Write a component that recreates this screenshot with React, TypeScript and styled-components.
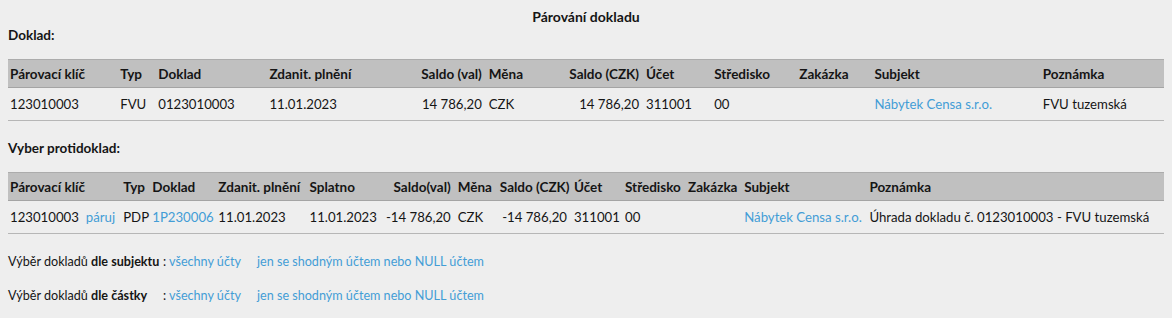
import React from 'react';
import styled, { createGlobalStyle } from 'styled-components';

const GlobalStyle = createGlobalStyle`
    html, body {
        margin: 0;
        padding: 0;
        background: #eeeeee;
    }
    body {
        font-family: Lato, 'Liberation Sans', sans-serif;
        font-size: 13px;
        color: #151515;
    }
`;

const Page = styled.div`
    padding: 9px 8px 0 8px;
`;

const PageTitle = styled.h1`
    margin: 0;
    font-size: 14px;
    line-height: 16px;
    font-weight: bold;
    text-align: center;
`;

const SectionTitle = styled.h2<{ $top: number }>`
    margin: ${p => p.$top}px 0 16px 0;
    font-size: 13.5px;
    line-height: 16px;
    font-weight: bold;
`;

const Table = styled.table`
    width: 100%;
    table-layout: fixed;
    border-collapse: collapse;
`;

const HeadRow = styled.tr`
    background: #c0c0c0;
    border-top: 1px solid #acacac;
    border-bottom: 1px solid #a4a4a4;
`;

const Th = styled.th<{ $right?: boolean }>`
    height: 27px;
    padding: 0 ${p => (p.$right ? '5px' : '2px')} 0 2px;
    text-align: ${p => (p.$right ? 'right' : 'left')};
    font-size: 13.5px;
    font-weight: bold;
    white-space: nowrap;
`;

const DataRow = styled.tr`
    border-bottom: 1px solid #b6b6b6;
`;

const Td = styled.td<{ $right?: boolean }>`
    height: 32px;
    padding: 0 ${p => (p.$right ? '5px' : '2px')} 0 2px;
    text-align: ${p => (p.$right ? 'right' : 'left')};
    font-size: 13.2px;
    white-space: nowrap;
`;

const Link = styled.a`
    color: #439dd6;
    text-decoration: none;
    cursor: pointer;
`;

const PairLink = styled(Link)`
    margin-left: 7px;
`;

const FilterList = styled.div`
    margin-top: 20px;
    display: grid;
    grid-template-columns: 155px 94px auto;
    row-gap: 18px;
    line-height: 16px;
    font-size: 12.6px;
    justify-content: start;
`;

const FilterLabel = styled.div`
    white-space: nowrap;
    b {
        font-weight: bold;
    }
`;

const FilterCell = styled.div`
    white-space: nowrap;
`;

type Col = { label: string; width: number; right?: boolean };

const docCols: Col[] = [
    { label: 'Párovací klíč', width: 110 },
    { label: 'Typ', width: 38 },
    { label: 'Doklad', width: 111 },
    { label: 'Zdanit. plnění', width: 131 },
    { label: 'Saldo (val)', width: 88, right: true },
    { label: 'Měna', width: 72 },
    { label: 'Saldo (CZK)', width: 85, right: true },
    { label: 'Účet', width: 68 },
    { label: 'Středisko', width: 85 },
    { label: 'Zakázka', width: 75 },
    { label: 'Subjekt', width: 168 },
    { label: 'Poznámka', width: 123 },
];

const counterCols: Col[] = [
    { label: 'Párovací klíč', width: 113 },
    { label: 'Typ', width: 29 },
    { label: 'Doklad', width: 66 },
    { label: 'Zdanit. plnění', width: 91 },
    { label: 'Splatno', width: 73 },
    { label: 'Saldo(val)', width: 75, right: true },
    { label: 'Měna', width: 42 },
    { label: 'Saldo (CZK)', width: 74, right: true },
    { label: 'Účet', width: 51 },
    { label: 'Středisko', width: 63 },
    { label: 'Zakázka', width: 56 },
    { label: 'Subjekt', width: 125 },
    { label: 'Poznámka', width: 296 },
];

const DataTable = ({ cols, children }: { cols: Col[]; children: React.ReactNode }) => (
    <Table>
        <colgroup>
            {cols.map((c, i) => (
                <col key={i} style={{ width: c.width }} />
            ))}
        </colgroup>
        <thead>
            <HeadRow>
                {cols.map((c, i) => (
                    <Th key={i} $right={c.right}>{c.label}</Th>
                ))}
            </HeadRow>
        </thead>
        <tbody>{children}</tbody>
    </Table>
);

export default function App() {
    return (
        <>
            <GlobalStyle />
            <Page>
                <PageTitle>Párování dokladu</PageTitle>
                <SectionTitle $top={2}>Doklad:</SectionTitle>
                <DataTable cols={docCols}>
                    <DataRow>
                        <Td>123010003</Td>
                        <Td>FVU</Td>
                        <Td>0123010003</Td>
                        <Td>11.01.2023</Td>
                        <Td $right>14 786,20</Td>
                        <Td>CZK</Td>
                        <Td $right>14 786,20</Td>
                        <Td>311001</Td>
                        <Td>00</Td>
                        <Td></Td>
                        <Td><Link>Nábytek Censa s.r.o.</Link></Td>
                        <Td>FVU tuzemská</Td>
                    </DataRow>
                </DataTable>

                <SectionTitle $top={19}>Vyber protidoklad:</SectionTitle>
                <DataTable cols={counterCols}>
                    <DataRow>
                        <Td>123010003<PairLink>páruj</PairLink></Td>
                        <Td>PDP</Td>
                        <Td><Link>1P230006</Link></Td>
                        <Td>11.01.2023</Td>
                        <Td>11.01.2023</Td>
                        <Td $right>-14 786,20</Td>
                        <Td>CZK</Td>
                        <Td $right>-14 786,20</Td>
                        <Td>311001</Td>
                        <Td>00</Td>
                        <Td></Td>
                        <Td><Link>Nábytek Censa s.r.o.</Link></Td>
                        <Td>Úhrada dokladu č. 0123010003 - FVU tuzemská</Td>
                    </DataRow>
                </DataTable>

                <FilterList>
                    <FilterLabel>Výběr dokladů <b>dle subjektu</b></FilterLabel>
                    <FilterCell>: <Link>všechny účty</Link></FilterCell>
                    <FilterCell><Link>jen se shodným účtem nebo NULL účtem</Link></FilterCell>

                    <FilterLabel>Výběr dokladů <b>dle částky</b></FilterLabel>
                    <FilterCell>: <Link>všechny účty</Link></FilterCell>
                    <FilterCell><Link>jen se shodným účtem nebo NULL účtem</Link></FilterCell>
                </FilterList>
            </Page>
        </>
    );
}
